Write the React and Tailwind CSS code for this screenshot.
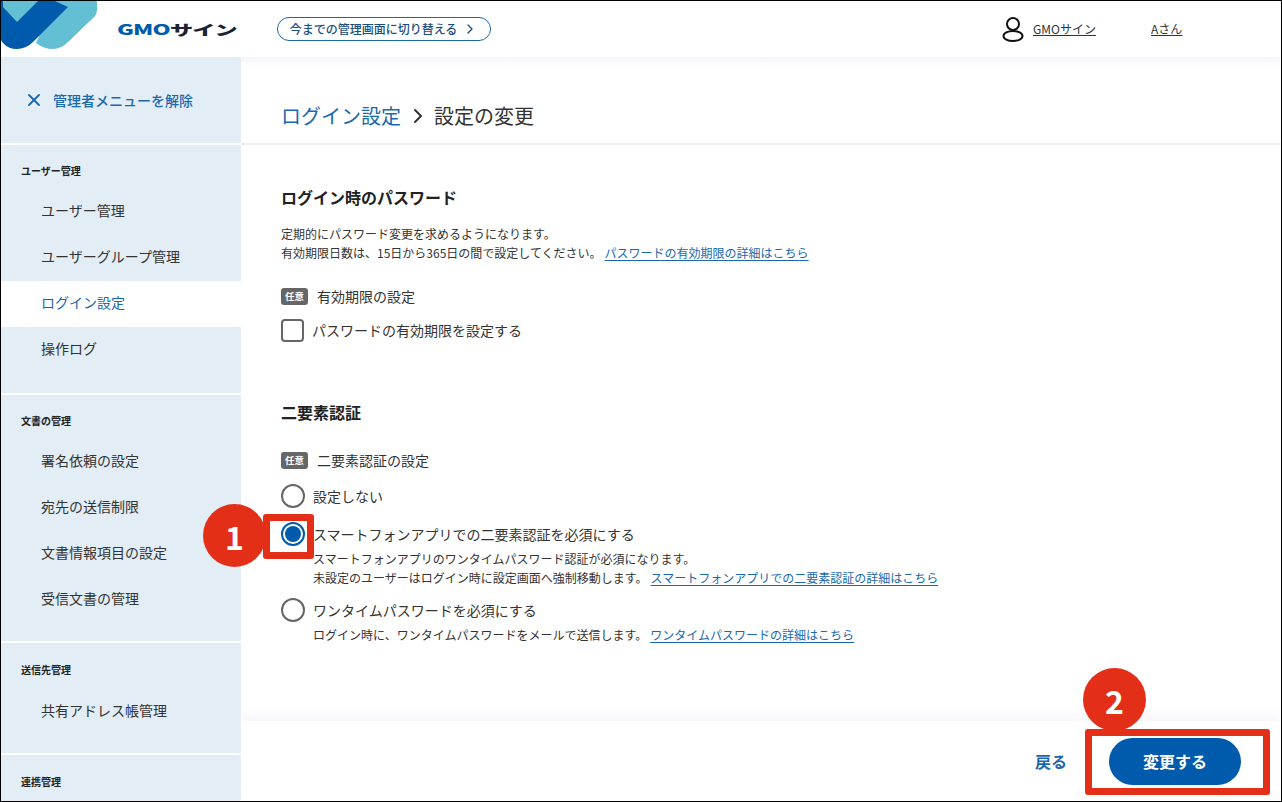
import { ChevronRight, X } from "lucide-react";

const FONT = "font-['Noto_Sans_CJK_JP','Noto_Sans',sans-serif]";

const MENU = [
  { title: "ユーザー管理", cls: "h-[248px] pt-[18px]", gap: "mb-[10px]", items: ["ユーザー管理", "ユーザーグループ管理", "ログイン設定", "操作ログ"] },
  { title: "文書の管理", cls: "h-[246px] pt-[18px]", gap: "mb-[10px]", items: ["署名依頼の設定", "宛先の送信制限", "文書情報項目の設定", "受信文書の管理"] },
  { title: "送信先管理", cls: "h-[110px] pt-[19px]", gap: "mb-[11px]", items: ["共有アドレス帳管理"] },
  { title: "連携管理", cls: "h-[60px] pt-[19px]", gap: "mb-[10px]", items: [] },
];

function Logo() {
  return (
    <svg width="100" height="50" viewBox="0 0 100 50" className="absolute left-[-1px] top-[-1px]">
      <path d="M55 1H97V10Q97 15 92 19L68 42Q61 49 53 49Q44 49 36 43Z" fill="#63bfd3" />
      <path d="M0 1H55L68 7L33 42Q26 49 17 49Q8 49 3 43Q0 40 0 35Z" fill="#005bac" />
      <path d="M3 1H38L17 22L3 7Z" fill="#63bfd3" />
    </svg>
  );
}

function Sidebar() {
  return (
    <aside className="w-[240px] shrink-0 flex flex-col gap-[2px]">
      <div className="h-[86px] shrink-0 bg-[#e3edf6] flex items-center pl-[23px] text-[#1a68ae] text-[14px] font-medium">
        <X size={20} strokeWidth={2.2} className="mr-[9px]" />
        管理者メニューを解除
      </div>
      {MENU.map((s) => (
        <div key={s.title} className={`${s.cls} shrink-0 bg-[#e3edf6] overflow-hidden`}>
          <p className={`${s.gap} pl-[20px] text-[10px] leading-[16px] font-bold text-[#222]`}>{s.title}</p>
          {s.items.map((item) => (
            <div
              key={item}
              className={`h-[46px] flex items-center pl-[40px] pb-[4px] text-[14px] ${
                item === "ログイン設定" ? "bg-white text-[#1a68ae]" : "text-[#333]"
              }`}
            >
              {item}
            </div>
          ))}
        </div>
      ))}
    </aside>
  );
}

function Tag() {
  return (
    <span className="w-[27px] h-[17px] rounded-[3px] bg-[#666] text-white text-[9.5px] font-bold flex items-center justify-center mr-[9px]">
      任意
    </span>
  );
}

function Radio({ checked }) {
  return (
    <span
      className={`w-[24px] h-[24px] rounded-full border-2 shrink-0 flex items-center justify-center bg-white ${
        checked ? "border-[#005bac]" : "border-[#666]"
      }`}
    >
      {checked && <span className="w-[16px] h-[16px] rounded-full bg-[#005bac]" />}
    </span>
  );
}

function Anchor({ children }) {
  return <span className="text-[#1a68ae] underline underline-offset-2 ml-[3px]">{children}</span>;
}

function Content() {
  return (
    <main className="flex-1 min-w-0 flex flex-col">
      <div className="h-[88px] shrink-0 flex items-end pb-[13px] pl-[40px] border-b-2 border-[#f0f0f4] bg-gradient-to-b from-[#f6f6fa] to-white to-[12%] text-[20px] leading-[28px]">
        <span className="text-[#1a68ae]">ログイン設定</span>
        <ChevronRight size={24} strokeWidth={2} className="ml-[5px] mr-[4px] mb-[2px] self-end text-[#333]" />
        <span className="text-[#333]">設定の変更</span>
      </div>

      <div className="flex-1 pl-[40px] pt-[40px] text-[#333]">
        <h2 className="text-[16px] leading-[24px] font-bold text-[#222]">ログイン時のパスワード</h2>
        <p className="mt-[15px] text-[12px] leading-[19px]">
          定期的にパスワード変更を求めるようになります。
          <br />
          有効期限日数は、15日から365日の間で設定してください。
          <Anchor>パスワードの有効期限の詳細はこちら</Anchor>
        </p>
        <div className="mt-[24px] flex items-center h-[20px] text-[14px]">
          <Tag />
          有効期限の設定
        </div>
        <div className="mt-[12px] flex items-center h-[24px] text-[14px]">
          <span className="w-[23px] h-[23px] rounded-[4px] border-2 border-[#666] mr-[8px]" />
          パスワードの有効期限を設定する
        </div>

        <h2 className="mt-[58px] text-[16px] leading-[24px] font-bold text-[#222]">二要素認証</h2>
        <div className="mt-[26px] flex items-center h-[20px] text-[14px]">
          <Tag />
          二要素認証の設定
        </div>
        <div className="mt-[14px] flex items-center gap-[8px] h-[24px] text-[14px]">
          <Radio />
          設定しない
        </div>
        <div className="mt-[14px] flex items-center gap-[8px] h-[24px] text-[14px]">
          <Radio checked />
          スマートフォンアプリでの二要素認証を必須にする
        </div>
        <p className="pl-[32px] text-[12px] leading-[19px] mt-[3px]">
          スマートフォンアプリのワンタイムパスワード認証が必須になります。
          <br />
          未設定のユーザーはログイン時に設定画面へ強制移動します。
          <Anchor>スマートフォンアプリでの二要素認証の詳細はこちら</Anchor>
        </p>
        <div className="mt-[11px] flex items-center gap-[8px] h-[24px] text-[14px]">
          <Radio />
          ワンタイムパスワードを必須にする
        </div>
        <p className="pl-[32px] text-[12px] leading-[19px] mt-[3px]">
          ログイン時に、ワンタイムパスワードをメールで送信します。
          <Anchor>ワンタイムパスワードの詳細はこちら</Anchor>
        </p>
      </div>

      <div className="h-[80px] shrink-0 flex items-center justify-end pr-[40px] shadow-[0_-6px_10px_rgba(240,240,248,0.6)]">
        <span className="text-[16px] font-bold text-[#1a68ae] mr-[42px]">戻る</span>
        <button className="w-[132px] h-[47px] rounded-full bg-[#005bac] text-white text-[16px] font-bold">
          変更する
        </button>
      </div>
    </main>
  );
}

export default function App() {
  return (
    <div className={`${FONT} relative w-[1282px] h-[802px] overflow-hidden bg-white border border-black flex flex-col`}>
      <header className="h-[56px] shrink-0 relative flex items-center">
        <Logo />
        <span className="ml-[116px] w-[124px] text-[14px] font-black tracking-[-0.5px] whitespace-nowrap text-[#1a2233] origin-left scale-x-[1.65]">
          <span className="text-[#005bac]">GMO</span>サイン
        </span>
        <span className="ml-[36px] w-[214px] h-[24px] rounded-full border border-[#1a68ae] text-[#1a4f7d] text-[12px] font-medium flex items-center justify-center">
          今までの管理画面に切り替える
          <ChevronRight size={16} strokeWidth={2} className="ml-[5px]" />
        </span>
        <svg width="24" height="26" viewBox="0 0 24 26" fill="none" stroke="#111" strokeWidth="2" className="absolute left-[1000px] top-[15px]">
          <circle cx="12" cy="8" r="6" />
          <ellipse cx="12" cy="20" rx="9.5" ry="5" />
        </svg>
        <span className="absolute left-[1032px] top-[19px] text-[12px] leading-[18px] text-[#333] underline">GMOサイン</span>
        <span className="absolute left-[1150px] top-[19px] text-[12px] leading-[18px] text-[#333] underline">Aさん</span>
      </header>

      <div className="flex-1 min-h-0 flex">
        <Sidebar />
        <Content />
      </div>

      {/* annotations */}
      <span className="absolute left-[202px] top-[503px] w-[63px] h-[63px] rounded-full bg-[#e42f18] text-white text-[32px] font-bold flex items-center justify-center">1</span>
      <span className="absolute left-[262px] top-[513px] w-[51px] h-[45px] rounded-[3px] border-[7px] border-[#e42f18]" />
      <span className="absolute left-[1082px] top-[667px] w-[63px] h-[63px] rounded-full bg-[#e42f18] text-white text-[32px] font-bold flex items-center justify-center">2</span>
      <span className="absolute left-[1084px] top-[728px] w-[185px] h-[66px] rounded-[3px] border-[7px] border-[#e42f18]" />
    </div>
  );
}
